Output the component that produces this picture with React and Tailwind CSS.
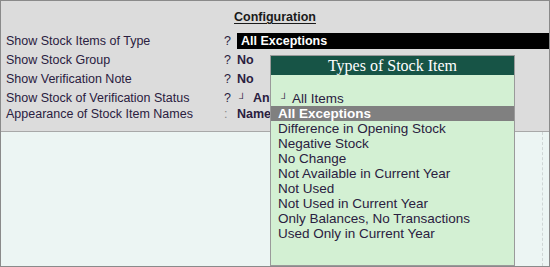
const rows = [
  { label: "Show Stock Items of Type", mark: "?", value: "All Exceptions", active: true },
  { label: "Show Stock Group", mark: "?", value: "No" },
  { label: "Show Verification Note", mark: "?", value: "No" },
  { label: "Show Stock of Verification Status", mark: "?", value: "Any", corner: true },
  { label: "Appearance of Stock Item Names", mark: ":", value: "Name", last: true },
];

const stockTypes = [
  "Difference in Opening Stock",
  "Negative Stock",
  "No Change",
  "Not Available in Current Year",
  "Not Used",
  "Not Used in Current Year",
  "Only Balances, No Transactions",
  "Used Only in Current Year",
];

const ConfigRow = ({ row, index }) => {
  const height = index === 0 ? "h-[16px] leading-[16px]" : row.last ? "h-[13px] leading-[13px]" : "h-[19px] leading-[19px]";
  return (
    <div className={`flex ${height} ${index === 1 ? "mt-[2px]" : ""}`}>
      <div className="w-[223px] pl-[5px] shrink-0">{row.label}</div>
      <div className={`w-[9px] shrink-0 ${row.last ? "text-[#8a8a8a]" : ""}`}>{row.mark}</div>
      {row.active ? (
        <div className="flex-1 bg-black text-white font-bold pl-[4px] ml-[4px]">{row.value}</div>
      ) : (
        <div className="flex-1 font-bold pl-[4px] whitespace-nowrap">
          {row.corner && <span className="font-normal text-[10px] ml-[2px] mr-[7px]">┘</span>}
          {row.value}
        </div>
      )}
    </div>
  );
};

export default function App() {
  return (
    <div className="relative w-[550px] h-[267px] border border-[#8a8a8a] bg-[#ecf5f3] text-[12.5px] text-[#2a2040] font-['Liberation_Sans',Arial,sans-serif] overflow-hidden">
      {/* top panel */}
      <div className="h-[131px] bg-[#dcdcdc] border-b border-[#a8a8a8]">
        <div className="h-[32px] pt-[9px] leading-[15px] text-center">
          <span className="font-bold underline underline-offset-2 text-[#1a1a1a]">Configuration</span>
        </div>
        {rows.map((row, i) => (
          <ConfigRow key={row.label} row={row} index={i} />
        ))}
      </div>

      {/* lower panel */}
      <div className="flex h-[134px]">
        <div className="flex-1" />
        <div className="w-[7px] border-l border-dashed border-[#cfd6d5]" />
      </div>

      {/* popup list */}
      <div className="absolute left-[269px] top-[54px] bottom-0 w-[245px] border border-[#9a9a9a] bg-[#d3f0d3] flex flex-col">
        <div className="h-[19px] bg-[#175446] text-white text-center font-['Liberation_Serif',serif] text-[16px] leading-[19px]">
          Types of Stock Item
        </div>
        <div className="pt-[16px] text-[13.5px]">
          <div className="h-[15px] leading-[15px] pl-[10px] flex">
            <span className="text-[10px] w-[11px]">┘</span>
            <span>All Items</span>
          </div>
          <div className="h-[15px] leading-[15px] pl-[7px] bg-[#808080] text-white font-bold">All Exceptions</div>
          {stockTypes.map((t) => (
            <div key={t} className="h-[15px] leading-[15px] pl-[7px]">
              {t}
            </div>
          ))}
        </div>
      </div>
    </div>
  );
}
